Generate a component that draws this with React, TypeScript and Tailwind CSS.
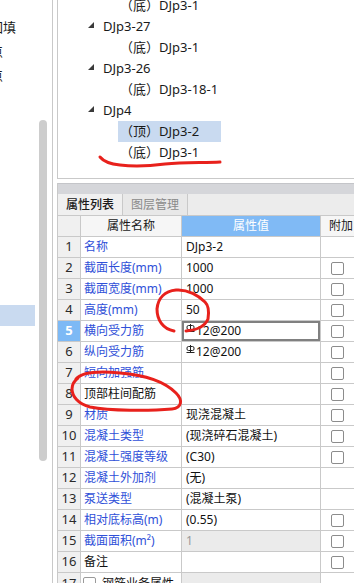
import React from 'react';

type Row = {
  n: number;
  name: string;
  val: string;
  cb: boolean;
  rebar?: boolean;
  sel?: boolean;
  black?: boolean;
  gray?: boolean;
};

const rows: Row[] = [
  { n: 1, name: '名称', val: 'DJp3-2', cb: false },
  { n: 2, name: '截面长度(mm)', val: '1000', cb: true },
  { n: 3, name: '截面宽度(mm)', val: '1000', cb: true },
  { n: 4, name: '高度(mm)', val: '50', cb: true },
  { n: 5, name: '横向受力筋', val: '12@200', rebar: true, cb: true, sel: true },
  { n: 6, name: '纵向受力筋', val: '12@200', rebar: true, cb: true },
  { n: 7, name: '短向加强筋', val: '', cb: true },
  { n: 8, name: '顶部柱间配筋', val: '', cb: true, black: true },
  { n: 9, name: '材质', val: '现浇混凝土', cb: true },
  { n: 10, name: '混凝土类型', val: '(现浇碎石混凝土)', cb: true },
  { n: 11, name: '混凝土强度等级', val: '(C30)', cb: true },
  { n: 12, name: '混凝土外加剂', val: '(无)', cb: false },
  { n: 13, name: '泵送类型', val: '(混凝土泵)', cb: false },
  { n: 14, name: '相对底标高(m)', val: '(0.55)', cb: true },
  { n: 15, name: '截面面积(m²)', val: '1', cb: true, gray: true },
  { n: 16, name: '备注', val: '', cb: true, black: true },
];

const tree = [
  { level: 2, text: '（底）DJp3-1' },
  { level: 1, text: 'DJp3-27' },
  { level: 2, text: '（底）DJp3-1' },
  { level: 1, text: 'DJp3-26' },
  { level: 2, text: '（底）DJp3-18-1' },
  { level: 1, text: 'DJp4' },
  { level: 2, text: '（顶）DJp3-2', selected: true },
  { level: 2, text: '（底）DJp3-1' },
];

const Checkbox = () => (
  <div className="w-[13px] h-[13px] rounded-[2px] border border-[#8c8c8c] bg-white" />
);

// grade III rebar mark
const RebarMark = () => (
  <svg width="9" height="9" viewBox="0 0 9 9" className="mb-[5px] mr-[1px]">
    <rect x="1" y="1.5" width="7" height="4" rx="1.5" fill="none" stroke="#222" strokeWidth="1" />
    <line x1="4.5" y1="0" x2="4.5" y2="7.5" stroke="#222" strokeWidth="1" />
    <line x1="0.5" y1="7.5" x2="8.5" y2="7.5" stroke="#222" strokeWidth="1" />
  </svg>
);

const App: React.FC = () => {
  return (
    <div className="relative w-[354px] h-[583px] overflow-hidden bg-white flex font-['Noto_Sans','Noto_Sans_CJK_SC',sans-serif] text-[#1a1a1a]">
      {/* Left nav (clipped) */}
      <div className="w-[53px] shrink-0 h-full border-r border-[#c9c9c9] flex overflow-hidden">
        <div className="w-[35px] shrink-0 flex flex-col text-[13px]">
          <div className="h-[15px]" />
          <div className="h-[24px] leading-[24px] whitespace-nowrap -ml-[10px]">回填</div>
          <div className="h-[24px] leading-[24px] whitespace-nowrap -ml-[10px]">点</div>
          <div className="h-[24px] leading-[24px] whitespace-nowrap -ml-[10px]">点</div>
          <div className="h-[218px]" />
          <div className="h-[21px] bg-[#c9daf0]" />
        </div>
        <div className="w-[4px] shrink-0" />
        <div className="w-[8px] shrink-0 pt-[120px]">
          <div className="h-[341px] rounded-full bg-[#cdcdcd]" />
        </div>
      </div>

      <div className="w-[4px] shrink-0" />

      {/* Right side */}
      <div className="w-[320px] shrink-0 flex flex-col">
        {/* Tree */}
        <div className="h-[179px] shrink-0 border-l border-b border-[#c9c9c9] overflow-hidden text-[13px]">
          <div className="-mt-[5px] flex flex-col">
            {tree.map((t, i) => (
              <div key={i} className="h-[21px] flex items-center">
                {t.level === 1 ? (
                  <>
                    <div className="w-[30px] shrink-0" />
                    <svg width="6" height="6" viewBox="0 0 6 6" className="shrink-0 mb-[3px]">
                      <polygon points="6,0 6,6 0,6" fill="#3a3a3a" />
                    </svg>
                    <div className="w-[9px] shrink-0" />
                    <span className="whitespace-nowrap">{t.text}</span>
                  </>
                ) : (
                  <>
                    <div className="w-[60px] shrink-0" />
                    <div
                      className={`h-[21px] flex items-center pl-[2px] whitespace-nowrap ${
                        t.selected ? 'w-[103px] bg-[#c9daf0]' : ''
                      }`}
                    >
                      {t.text}
                    </div>
                  </>
                )}
              </div>
            ))}
          </div>
        </div>

        <div className="h-[4px] shrink-0" />

        {/* Property panel */}
        <div className="flex-1 border-l border-[#c9c9c9] flex flex-col text-[12px]">
          <div className="h-[11px] shrink-0 bg-[#d5d6da] border-t border-[#c4c5c9]" />
          <div className="h-[22px] shrink-0 flex bg-[#ececec] border-b border-[#c9c9c9]">
            <div className="w-[65px] flex items-center justify-center border-r border-[#c9c9c9] bg-[#f0f0f0] text-[#1a1a1a] font-medium">
              属性列表
            </div>
            <div className="w-[65px] flex items-center justify-center border-r border-[#c9c9c9] bg-[#e8e8e8] text-[#8a8a8a]">
              图层管理
            </div>
          </div>

          {/* header */}
          <div className="h-[21px] shrink-0 flex border-b border-[#c9c9c9]">
            <div className="w-[23px] shrink-0 bg-[#f0f0f0] border-r border-[#c9c9c9]" />
            <div className="w-[101px] shrink-0 bg-[#f6f6f6] border-r border-[#c9c9c9] flex items-center justify-center">
              属性名称
            </div>
            <div className="w-[139px] shrink-0 bg-[#80baf5] border-r border-[#c9c9c9] flex items-center justify-center text-white">
              属性值
            </div>
            <div className="w-[40px] shrink-0 bg-[#f6f6f6] flex items-center justify-center">附加</div>
          </div>

          {rows.map((r) => (
            <div key={r.n} className="h-[21px] shrink-0 flex border-b border-[#c9c9c9]">
              <div
                className={`w-[23px] shrink-0 border-r border-[#c9c9c9] flex items-center justify-center text-[13px] ${
                  r.sel ? 'bg-[#7db9f5] text-white font-bold' : 'bg-[#f0f0f0] text-[#2a2a2a]'
                }`}
              >
                {r.n}
              </div>
              <div
                className={`w-[101px] shrink-0 border-r border-[#c9c9c9] flex items-center pl-[3px] whitespace-nowrap overflow-hidden ${
                  r.black ? 'text-[#111]' : 'text-[#2f50d8]'
                }`}
              >
                {r.name}
              </div>
              <div
                className={`w-[139px] shrink-0 border-r border-[#c9c9c9] flex items-center pl-[4px] whitespace-nowrap ${
                  r.gray ? 'bg-[#ebebeb] text-[#9a9a9a]' : 'text-[#111]'
                } ${r.sel ? 'shadow-[inset_0_0_0_2px_#808080]' : ''}`}
              >
                {r.rebar && <RebarMark />}
                {r.val}
              </div>
              <div className="w-[40px] shrink-0 flex items-center pl-[10px]">{r.cb && <Checkbox />}</div>
            </div>
          ))}

          {/* group row */}
          <div className="h-[21px] shrink-0 flex">
            <div className="w-[23px] shrink-0 bg-[#f0f0f0] border-r border-[#c9c9c9] flex items-center justify-center text-[13px] text-[#2a2a2a]">
              17
            </div>
            <div className="w-[101px] shrink-0 border-r border-[#c9c9c9] flex items-center pl-[2px] gap-[6px] whitespace-nowrap overflow-hidden text-[#111]">
              <div className="w-[13px] h-[13px] rounded-[2px] border border-[#9a9a9a] bg-white shrink-0" />
              钢筋业务属性
            </div>
            <div className="w-[139px] shrink-0 border-r border-[#c9c9c9] bg-[#ebebeb]" />
            <div className="w-[40px] shrink-0" />
          </div>
        </div>
      </div>

      {/* red hand-drawn annotations */}
      <svg className="absolute inset-0 pointer-events-none" width="354" height="583" viewBox="0 0 354 583">
        <g fill="none" stroke="#e8211c" strokeWidth="3" strokeLinecap="round" strokeLinejoin="round">
          <path d="M100,157 C104,162 110,164 120,165 C135,167 150,166 165,164 C185,162 205,163 220,162" />
          <path d="M174,331 C163,329 157,320 157,309 C158,298 165,291 176,290 C188,289 199,296 205,302 C209,306 209,313 208,319 C205,326 198,330 186,331" />
          <path d="M76,379 C82,372 100,371 120,373 C145,375 165,382 176,393 C183,400 182,408 172,409 C150,411 110,411 90,407 C78,404 72,396 72,389 C72,384 74,381 78,378" />
        </g>
      </svg>
    </div>
  );
};

export default App;
